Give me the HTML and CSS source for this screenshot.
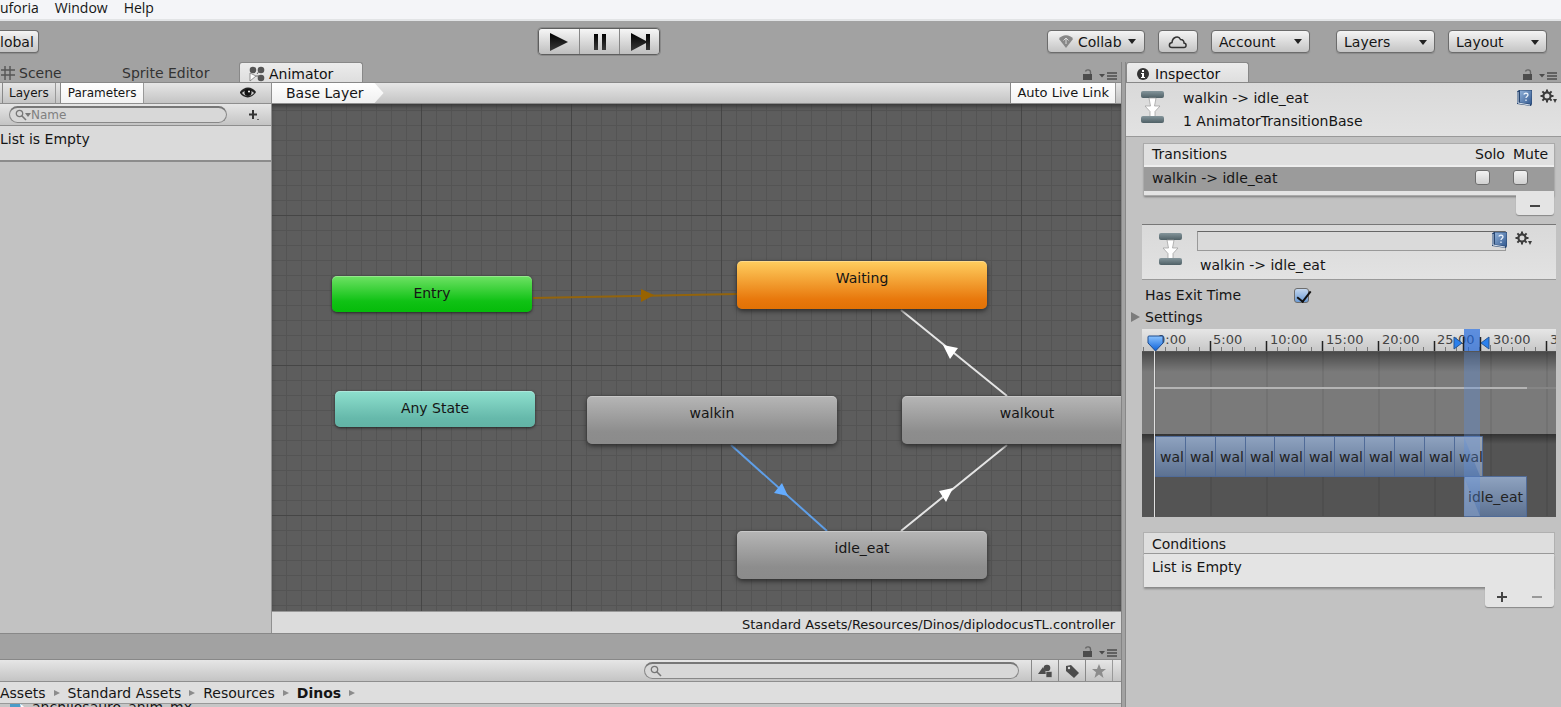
FILE: index.html
```html
<!DOCTYPE html>
<html lang="en">
<head>
<meta charset="utf-8">
<title>Animator</title>
<link rel="stylesheet" href="styles.css">
</head>
<body>
<svg class="defs" aria-hidden="true">
  <defs>
    <linearGradient id="bar" x1="0" y1="0" x2="0" y2="1"><stop offset="0" stop-color="#84959b"/><stop offset="1" stop-color="#4f6066"/></linearGradient>
    <linearGradient id="ink" x1="0" y1="0" x2="0" y2="1"><stop offset="0" stop-color="#000"/><stop offset="1" stop-color="#3a3a3a"/></linearGradient>
    <linearGradient id="book" x1="0" y1="0" x2="1" y2="1"><stop offset="0" stop-color="#8fb0d8"/><stop offset="1" stop-color="#345a90"/></linearGradient>
    <linearGradient id="clip" x1="0" y1="0" x2="0" y2="1"><stop offset="0" stop-color="#8fa3c0"/><stop offset="1" stop-color="#5c7191"/></linearGradient>
    <linearGradient id="rule" x1="0" y1="0" x2="0" y2="1"><stop offset="0" stop-color="#e6e6e6"/><stop offset="1" stop-color="#c6c6c6"/></linearGradient>
    <linearGradient id="shade" x1="0" y1="0" x2="0" y2="1"><stop offset="0" stop-color="#000" stop-opacity=".4"/><stop offset="1" stop-color="#000" stop-opacity="0"/></linearGradient>
    <linearGradient id="pin" x1="0" y1="0" x2="0" y2="1"><stop offset="0" stop-color="#8cc4ff"/><stop offset="1" stop-color="#0a5fd8"/></linearGradient>
    <symbol id="i-lock" viewBox="0 0 10 12"><path d="M0 5h9v6H0z" fill="#4c4c4c"/><path d="M7.500 5V3C7.500 .3 3 .3 2.500 2.500" fill="none" stroke="#666" stroke-width="1.400"/></symbol>
    <symbol id="i-menu" viewBox="0 0 18 10"><path d="M0 3h6L3 6.500z" fill="#4c4c4c"/><path d="M8 2h10M8 5h10M8 8h10" stroke="#4c4c4c" stroke-width="1.500"/></symbol>
    <symbol id="i-transition" viewBox="0 0 24 36"><rect x="1" y="1" width="23" height="7" rx="2" fill="url(#bar)"/><path d="M9 8h7l-1.500 8H20l-5 5.500V27h-5v-5.500L5 16h5.500z" fill="#fff" stroke="#999" stroke-width=".7"/><rect x="1" y="26" width="23" height="7" rx="2" fill="url(#bar)"/></symbol>
    <symbol id="i-help" viewBox="0 0 18 18"><path d="M1 2.500 3 1h13v14l-1 2L1 15z" fill="#27456f"/><path d="M4 1.500h11.500V15L4 13.500z" fill="url(#book)"/><path d="M2 3v11l12 2" fill="none" stroke="#dce6f2"/><path d="M7.800 5.500c.5-1.700 4.200-1.700 4.200.3 0 1.700-2 1.700-2 3.200M10 10.500V12" fill="none" stroke="#e8f0fa" stroke-width="1.300"/></symbol>
    <symbol id="i-gear" viewBox="0 0 18 16"><circle cx="7" cy="7" r="3.600" fill="none" stroke="#3c3c3c" stroke-width="2.200"/><path d="M7 .5v2.500M7 11v2.500M.5 7H3M11 7h2.500M2.400 2.400l1.800 1.800M9.800 9.800l1.800 1.800M2.400 11.600l1.800-1.800M9.800 4.200l1.800-1.800" stroke="#3c3c3c" stroke-width="2"/><path d="M13 10h4l-2 4z" fill="#3c3c3c"/></symbol>
    <symbol id="i-search" viewBox="0 0 12 12"><circle cx="4.500" cy="4.500" r="3.200" fill="none" stroke="#777" stroke-width="1.300"/><path d="m7 7 4 4" stroke="#777" stroke-width="1.600"/></symbol>
  </defs>
</svg>

<nav class="menubar"><a href="#">uforia</a><a href="#">Window</a><a href="#">Help</a></nav>

<header class="toolbar">
  <div class="tool-left"><button class="btn btn-global">lobal</button></div>
  <div class="playback">
    <button aria-label="Play"><svg width="20" height="18"><path d="M1 0v18l18-9z" fill="url(#ink)"/></svg></button>
    <button aria-label="Pause"><svg width="20" height="18"><path d="M4 1h4v16H4zM12 1h4v16h-4z" fill="url(#ink)"/></svg></button>
    <button aria-label="Step"><svg width="20" height="18"><path d="M1 0v18l15-8v7h4V1h-4v7z" fill="url(#ink)"/></svg></button>
  </div>
  <div class="tool-right">
    <button class="btn btn-drop collab"><svg width="14" height="13" viewBox="0 0 14 13"><path d="M0 4C3-1 11-1 14 4L7 13z" fill="#888"/><path d="M7 3v6M4.500 5.500 7 3l2.500 2.500" fill="none" stroke="#ddd"/></svg>Collab<span class="caret"></span></button>
    <button class="btn cloud" aria-label="Cloud services"><svg width="20" height="14" viewBox="0 0 20 14"><path d="M4 12.500C.5 12.500.5 8 4 7.500 4.500 2 10.500 0 12.500 4.500c3 .2 3.500 2 3.500 3.500 3 .5 2.500 4.500 0 4.500z" fill="none" stroke="#333" stroke-width="1.500"/></svg></button>
    <button class="btn btn-drop">Account<span class="caret"></span></button>
    <label class="drop drop-layers"><select class="btn" aria-label="Layers"><option>Layers</option></select><span class="caret"></span></label>
    <label class="drop"><select class="btn" aria-label="Layout"><option>Layout</option></select><span class="caret"></span></label>
  </div>
</header>

<div class="workspace">
  <main class="docks">
    <div class="tabs">
      <button class="tab tab-scene"><svg width="14" height="14" viewBox="0 0 14 14"><path d="M4 0v14M9 0v14M0 4h14M0 9h14" stroke="#555" stroke-width="1.400"/></svg>Scene</button>
      <button class="tab tab-sprite">Sprite Editor</button>
      <button class="tab tab-active tab-animator"><svg width="16" height="16" viewBox="0 0 16 16"><g fill="#555"><circle cx="4" cy="4" r="3.300"/><circle cx="12" cy="4" r="3.300"/><circle cx="12" cy="12" r="3.300"/></g><path d="M1 7v8l6-5z" fill="#fff" stroke="#777" stroke-width=".8"/><path d="m8 8 3-4M7 10h4" stroke="#666"/></svg>Animator</button>
      <span class="tab-tools"><svg width="10" height="12"><use href="#i-lock"/></svg><svg width="18" height="10"><use href="#i-menu"/></svg></span>
    </div>

    <section class="animator">
      <aside class="params">
        <div class="strip">
          <button class="seg">Layers</button><button class="seg seg-on">Parameters</button>
          <svg class="eye" width="16" height="12" viewBox="0 0 16 12"><path d="M0 5C4-1 12-1 16 5 12 12 4 12 0 6z" fill="#222"/><path d="M2 6c2-3 10-3 12 0-3 4-9 4-12 0z" fill="#ccc"/><circle cx="8" cy="5.500" r="3.500" fill="#111"/><circle cx="9" cy="4.500" r="1" fill="#fff"/></svg>
        </div>
        <div class="strip strip-search">
          <label class="search"><svg width="12" height="12"><use href="#i-search"/></svg><span class="search-caret"></span><input type="text" placeholder="Name" aria-label="Parameter name"></label>
          <button class="add" aria-label="Add parameter"><svg width="12" height="12" viewBox="0 0 12 12"><path d="M5 1v9M1 5.500h8" stroke="#333" stroke-width="2"/><path d="M9 10h2v1H9z" fill="#666"/></svg></button>
        </div>
        <p class="param-empty">List is Empty</p>
      </aside>

      <div class="graph">
        <div class="strip graph-strip">
          <button class="crumb-layer">Base Layer</button>
          <button class="seg seg-on live">Auto Live Link</button>
        </div>
        <div class="canvas">
          <svg class="edges" aria-hidden="true">
            <g fill="none" stroke-width="2">
              <path d="M261 194 465 190" stroke="#93640c"/>
              <path d="M735 292 629 206M629 427 735 341" stroke="#e4e4e4"/>
              <path d="M459 341 555 427" stroke="#5f9fe8"/>
            </g>
            <path d="M369 185v13l13-7z" fill="#986300"/>
            <path d="m671 241 15 3-8 11zM681 384l-14 3 7 11z" fill="#fff"/>
            <path d="m516 392-14-3 8-10z" fill="#64acff"/>
          </svg>
          <div class="node entry">Entry</div>
          <div class="node any">Any State</div>
          <div class="node state waiting">Waiting</div>
          <div class="node state walkin">walkin</div>
          <div class="node state walkout">walkout</div>
          <div class="node state idle">idle_eat</div>
        </div>
        <footer class="path">Standard Assets/Resources/Dinos/diplodocusTL.controller</footer>
      </div>
    </section>

    <section class="project">
      <div class="tabs tabs-project"><span class="tab-tools"><svg width="10" height="12"><use href="#i-lock"/></svg><svg width="18" height="10"><use href="#i-menu"/></svg></span></div>
      <div class="strip project-strip">
        <label class="search project-search"><svg width="12" height="12"><use href="#i-search"/></svg><input type="text" aria-label="Search assets"></label>
        <div class="filters">
          <button aria-label="Search by type"><svg width="15" height="14" viewBox="0 0 15 14"><path d="m0 10 5-7 4 7z" fill="#4c4c4c"/><circle cx="9" cy="4" r="3.300" fill="#4c4c4c"/><path d="M8 7.500h6v6H8z" fill="#4c4c4c" stroke="#ccc" stroke-width=".7"/></svg></button>
          <button aria-label="Search by label"><svg width="15" height="14" viewBox="0 0 15 14"><path d="M1 2 6 1l8 8-5 5-8-7z" fill="#4c4c4c"/><circle cx="4" cy="4" r="1.200" fill="#ddd"/></svg></button>
          <button aria-label="Save search"><svg width="14" height="14" viewBox="0 0 14 14"><path d="m7 0 2 5h5l-4 3.300L11.500 14 7 10.500 2.500 14 4 8.300 0 5h5z" fill="#8c8c8c"/></svg></button>
        </div>
      </div>
      <nav class="breadcrumb"><a href="#">Assets</a><i></i><a href="#">Standard Assets</a><i></i><a href="#">Resources</a><i></i><a href="#" class="here">Dinos</a><i></i></nav>
      <div class="files"><div class="file"><svg width="28" height="16"><path d="M10 4h12v12H10z" fill="#4a9cc8"/><path d="m20 4 6 6v6h-4z" fill="#fff"/></svg>anchilosauro_anim_mx</div></div>
    </section>
  </main>

  <aside class="inspector">
    <div class="tabs">
      <button class="tab tab-active tab-inspector"><svg width="12" height="12" viewBox="0 0 12 12"><circle cx="6" cy="6" r="6" fill="#333"/><path d="M5 2h2v2H5zM4 5h3v4h1v1H4V9h1V6H4z" fill="#fff"/></svg>Inspector</button>
      <span class="tab-tools"><svg width="10" height="12"><use href="#i-lock"/></svg><svg width="18" height="10"><use href="#i-menu"/></svg></span>
    </div>
    <div class="inspector-body">
      <header class="object">
        <svg class="object-icon" width="24" height="36"><use href="#i-transition"/></svg>
        <div class="object-names"><span>walkin -&gt; idle_eat</span><span>1 AnimatorTransitionBase</span></div>
        <div class="object-tools"><svg width="18" height="18"><use href="#i-help"/></svg><svg width="18" height="16"><use href="#i-gear"/></svg></div>
      </header>

      <section class="list">
        <table class="transitions">
          <thead><tr><th>Transitions</th><th class="flag">Solo</th><th class="flag">Mute</th></tr></thead>
          <tbody><tr><td>walkin -&gt; idle_eat</td><td class="flag"><input type="checkbox" aria-label="Solo"></td><td class="flag"><input type="checkbox" aria-label="Mute"></td></tr></tbody>
        </table>
        <div class="list-foot list-foot-one"><button aria-label="Remove transition"><svg width="12" height="12"><path d="M1 7h10" stroke="#444" stroke-width="2"/></svg></button></div>
      </section>

      <section class="detail">
        <svg class="detail-icon" width="24" height="36"><use href="#i-transition"/></svg>
        <div class="detail-main"><input class="name-field" type="text" aria-label="Transition name"><span>walkin -&gt; idle_eat</span></div>
        <div class="object-tools detail-tools"><svg width="18" height="18"><use href="#i-help"/></svg><svg width="18" height="16"><use href="#i-gear"/></svg></div>
      </section>

      <div class="field"><label for="exit">Has Exit Time</label><input id="exit" type="checkbox" checked></div>
      <button class="foldout"><i></i>Settings</button>

      <svg class="timeline" role="img" aria-label="Transition timeline">
        <defs>
          <pattern id="beats" x="12" y="0" width="56" height="188" patternUnits="userSpaceOnUse"><path d="M1 0v188" stroke="#000" stroke-opacity=".13"/></pattern>
        </defs>
        <rect width="100%" height="23" fill="url(#rule)"/>
        <rect y="23" width="100%" height="82" fill="#7a7a7a"/>
        <rect y="23" width="100%" height="20" fill="url(#shade)"/>
        <rect y="105" width="100%" height="83" fill="#545454"/>
        <rect y="105" width="100%" height="10" fill="url(#shade)"/>
        <rect y="23" width="100%" height="165" fill="url(#beats)"/>
        <path d="M0 22.500h600M0 187.500h600" stroke="#555"/>
        <path d="M1.500 18v4m22-4v4m11-4v4m12-4v4m11-4v4m22-4v4m11-4v4m12-4v4m11-4v4m22-4v4m11-4v4m12-4v4m11-4v4m22-4v4m11-4v4m12-4v4m11-4v4m22-4v4m11-4v4m12-4v4m11-4v4m22-4v4m11-4v4m12-4v4m11-4v4m11-6v6m11-4v4m11-4v4m12-4v4m11-4v4" stroke="#777"/>
        <path d="M68.500 12v10m56-10v10m56-10v10m56-10v10m56-10v10m112-10v10" stroke="#222" stroke-width="1.500"/>
        <g class="times"><text x="15" y="15">0:00</text><text x="71" y="15">5:00</text><text x="128" y="15">10:00</text><text x="184" y="15">15:00</text><text x="240" y="15">20:00</text><text x="295" y="15">25:00</text><text x="351" y="15">30:00</text><text x="408" y="15">35:00</text></g>
        <path d="M12 59h373" stroke="#b4b4b4" stroke-width="2"/><path d="M385 59h200" stroke="#858585" stroke-width="2"/>
        <g fill="url(#clip)" stroke="#506b98">
          <path d="M13.500 107.500h30v40h-30zM43.500 107.500h30v40h-30zM73.500 107.500h30v40h-30zM103.500 107.500h29v40h-29zM132.500 107.500h30v40h-30zM162.500 107.500h30v40h-30zM192.500 107.500h30v40h-30zM222.500 107.500h30v40h-30zM252.500 107.500h30v40h-30zM282.500 107.500h30v40h-30zM312.500 107.500h28v40h-28z"/>
          <path d="M322.500 147.500h62v40h-62z"/>
        </g>
        <path d="M322 108h18v39h-2z" fill="#aaa" fill-opacity=".5"/><path d="M322 148v39h16z" fill="#aaa" fill-opacity=".5"/>
        <g class="clips"><text x="18" y="133">wal</text><text x="48" y="133">wal</text><text x="78" y="133">wal</text><text x="108" y="133">wal</text><text x="137" y="133">wal</text><text x="167" y="133">wal</text><text x="197" y="133">wal</text><text x="227" y="133">wal</text><text x="257" y="133">wal</text><text x="287" y="133">wal</text><text x="317" y="133">wal</text><text x="326" y="173">idle_eat</text></g>
        <rect x="322" y="0" width="16" height="22" fill="#1d66dc" fill-opacity=".68"/>
        <rect x="322" y="23" width="16" height="164" fill="#5b8fe0" fill-opacity=".35"/>
        <path d="M321.500 8v14M338.500 8v14" stroke="#222" stroke-width="1.500"/>
        <path d="M312 8v12l8-6zM347 8v12l-8-6z" fill="#2b80ec" stroke="#245493"/>
        <path d="M12.500 22v166" stroke="#e0e0e0"/>
        <path d="M6 8q0-1 1-1h13q1 0 1 1v6l-7.500 8L6 14z" fill="url(#pin)" stroke="#1c4a8c"/>
      </svg>

      <section class="list conditions">
        <h2>Conditions</h2>
        <p>List is Empty</p>
        <div class="list-foot"><button aria-label="Add condition"><svg width="12" height="12"><path d="M1 6h10M6 1v10" stroke="#444" stroke-width="2"/></svg></button><button aria-label="Remove condition"><svg width="12" height="12"><path d="M1 6h10" stroke="#999" stroke-width="2"/></svg></button></div>
      </section>
    </div>
  </aside>
</div>
</body>
</html>
```

FILE: styles.css
```css
* { box-sizing: border-box; }
body {
  margin: 0; height: 100vh; overflow: hidden;
  display: flex; flex-direction: column;
  background: #a2a2a2; color: #151515;
  font: 14px/18px "DejaVu Sans", Verdana, sans-serif;
}
button, input, select { font: inherit; color: inherit; margin: 0; padding: 0; border: 0; background: none; }
button { display: flex; align-items: center; }
a { color: inherit; text-decoration: none; }
p, h2 { margin: 0; font: inherit; }
svg { flex: none; display: block; }
.defs { position: absolute; width: 0; height: 0; }

.menubar {
  flex: none; height: 21px; display: flex; gap: 16px;
  background: #f4f5f8; border-bottom: 2px solid #e2e4e6;
  font-family: "Open Sans", "Noto Sans", sans-serif; line-height: 16px;
}

/* main toolbar */
.toolbar { flex: none; height: 41px; display: grid; grid-template-columns: 538px auto 1fr; align-items: center; }
.btn {
  height: 23px; border: 1px solid #6c6c6c; border-radius: 4px;
  background: linear-gradient(#f4f4f4, #c4c4c4); box-shadow: 0 1px 1px #8a8a8a;
}
.btn-global { width: 39px; border-left: 0; border-radius: 0 4px 4px 0; }
.playback { display: flex; border: 1px solid #5e5e5e; border-radius: 4px; overflow: hidden; box-shadow: 0 0 0 1px #8a8a8a; }
.playback button { width: 40px; height: 25px; justify-content: center; background: linear-gradient(#f6f6f6, #bebebe); }
.playback button + button { border-left: 1px solid #868686; }
.tool-right { display: flex; justify-content: flex-end; gap: 13px; padding-right: 14px; }
.btn-drop { width: 99px; padding: 0 7px; gap: 5px; }
.collab { width: 98px; padding: 0 8px 0 11px; }
.cloud { width: 40px; justify-content: center; }
.caret { width: 0; height: 0; border: 4px solid transparent; border-top: 5px solid #222; border-bottom: 0; margin-left: auto; }
.drop { position: relative; }
.drop select { appearance: none; width: 99px; padding: 0 7px; display: block; }
.drop .caret { position: absolute; right: 8px; top: 10px; }
.drop-layers { margin-left: 13px; }

/* docked panels */
.workspace { flex: 1; min-height: 0; display: flex; gap: 3px; }
.docks { flex: 1; min-width: 0; display: flex; flex-direction: column; border-right: 1px solid #858585; }
.tabs { flex: none; height: 20px; display: flex; }
.tab { height: 20px; padding-top: 2px; color: #333; gap: 4px; }
.tab-active { background: linear-gradient(#ececec, #dedede); border: 1px solid #888; border-bottom: 0; border-radius: 3px 3px 0 0; color: #111; }
.tab-scene { width: 122px; padding-left: 1px; }
.tab-sprite { width: 117px; }
.tab-animator { width: 124px; padding-left: 9px; }
.tab-inspector { width: 123px; padding-left: 10px; gap: 6px; }
.tab-tools { margin-left: auto; display: flex; align-items: flex-end; gap: 6px; padding: 0 4px 1px 0; }
.strip {
  flex: none; height: 22px; display: flex; align-items: stretch;
  background: linear-gradient(#e6e6e6, #c4c4c4);
  border-top: 1px solid #888; border-bottom: 1px solid #8e8e8e; font-size: 12px;
}
.animator { flex: 1; min-height: 0; display: flex; border-bottom: 1px solid #888; }
.params { flex: none; width: 272px; background: #c2c2c2; border-right: 1px solid #909090; }
.seg { padding: 0 6px; border-left: 1px solid #888; border-right: 1px solid #999; }
.seg-on { background: linear-gradient(#fff, #f2f2f2); }
.params .seg { margin-left: 2px; }
.params .seg-on { margin-left: 4px; padding: 0 7px; }
.eye { margin: 4px 15px 0 auto; }
.strip-search { border-top: 0; align-items: center; padding-left: 9px; }
.search {
  display: flex; align-items: center; width: 218px; height: 17px; padding: 0 5px;
  border: 1px solid #888; border-top: 2px solid #777; border-radius: 9px; background: #d8d8d8;
}
.search input { flex: 1; min-width: 0; height: 14px; outline: 0; }
.search input::placeholder { color: #808080; opacity: 1; }
.search-caret { border: 3px solid transparent; border-top: 4px solid #777; border-bottom: 0; margin-left: -2px; }
.add { margin-left: auto; margin-right: 11px; }
.param-empty { height: 36px; padding-top: 4px; background: #dadada; border-bottom: 2px solid #8c8c8c; }

/* state graph */
.graph { flex: 1; min-width: 0; display: flex; flex-direction: column; }
.graph-strip { font-size: 14px; justify-content: space-between; }
.crumb-layer { padding: 0 20px 0 14px; background: linear-gradient(#fff, #f0f0f0); clip-path: polygon(0 0, calc(100% - 9px) 0, 100% 50%, calc(100% - 9px) 100%, 0 100%); }
.live { font-size: 13px; margin-right: 5px; }
.canvas {
  flex: 1; position: relative; overflow: hidden; background-color: #5d5d5d;
  box-shadow: inset 0 4px 5px -2px #333;
  background-image:
    linear-gradient(90deg, #464646 1px, transparent 1px), linear-gradient(#464646 1px, transparent 1px),
    linear-gradient(90deg, #545454 1px, transparent 1px), linear-gradient(#545454 1px, transparent 1px);
  background-size: 150px 150px, 150px 150px, 15px 15px, 15px 15px;
  background-position: 149px 111px, 149px 111px, 14px 6px, 14px 6px;
}
.edges { position: absolute; left: 0; top: 0; width: 100%; height: 100%; }
.node { position: absolute; width: 200px; height: 36px; padding-top: 8px; text-align: center; border-radius: 5px; box-shadow: 0 1px 3px #222, inset 0 1px 0 #fff4; }
.state { width: 250px; height: 48px; background: linear-gradient(#b6b6b6, #8d8d8d 75%, #8b8b8b); box-shadow: 0 2px 5px #2a2a2a, inset 0 1px 0 #fff4; }
.entry { left: 60px; top: 172px; background: linear-gradient(#6fe265, #10c215 70%, #05bb0a); }
.any { left: 63px; top: 287px; background: linear-gradient(#8ee0ce, #66b9ab 75%, #62b3a5); }
.waiting { left: 465px; top: 157px; background: linear-gradient(#ffce5f, #e8780c 80%, #e27205); }
.walkin { left: 315px; top: 292px; }
.walkout { left: 630px; top: 292px; }
.idle { left: 465px; top: 427px; }
.path { flex: none; height: 22px; padding: 4px 6px 0 0; background: #dcdcdc; border-top: 1px solid #999; text-align: right; font-size: 13px; }

/* project browser */
.project { flex: none; height: 73px; display: flex; flex-direction: column; overflow: hidden; }
.tabs-project { height: 25px; }
.project-strip { height: 23px; align-items: center; justify-content: flex-end; }
.project-search { width: 375px; margin-right: 12px; }
.filters { align-self: stretch; display: flex; margin-right: 8px; border-right: 1px solid #999; }
.filters button { width: 27px; justify-content: center; border-left: 1px solid #888; }
.breadcrumb { flex: none; height: 22px; display: flex; align-items: center; gap: 8px; background: #dedede; border-bottom: 1px solid #999; }
.breadcrumb i { border: 3px solid transparent; border-left: 6px solid #8c8c8c; border-right: 0; }
.here { font-weight: bold; }
.files { flex: 1; min-height: 0; overflow: hidden; display: flex; align-items: flex-start; background: #c6c6c6; }
.file { display: flex; align-items: center; gap: 4px; margin-top: -6px; }

/* inspector */
.inspector { flex: none; width: 436px; display: flex; flex-direction: column; border-left: 1px solid #888; }
.inspector-body { flex: 1; background: #c2c2c2; border-top: 1px solid #888; }
.object { height: 54px; display: flex; padding: 6px 3px 0 14px; background: linear-gradient(#d9d9d9, #e2e2e2); border-bottom: 1px solid #999; }
.object-icon { margin-top: 1px; }
.object-names { flex: 1; display: grid; gap: 5px; align-content: start; padding-left: 19px; }
.object-tools { display: flex; align-items: flex-start; gap: 6px; }
.list { margin: 7px 7px 0 18px; }
.transitions { width: 100%; border-collapse: collapse; background: #e0e0e0; box-shadow: 0 0 0 1px #aaa, 0 2px 2px #777; border-bottom: 4px solid #e4e4e4; }
.transitions th, .transitions td { padding: 0 0 3px 8px; text-align: left; font-weight: normal; }
.transitions th { height: 22px; padding-bottom: 1px; border-bottom: 1px solid #999; }
.transitions td { height: 27px; background: #9b9b9b; border-bottom: 1px solid #888; border-top: 2px solid #eee; }
.transitions .flag { width: 38px; padding-left: 0; }
.transitions .flag:last-child { width: 41px; }
input[type="checkbox"] { appearance: none; display: block; width: 15px; height: 15px; border: 1px solid #6d6d6d; border-radius: 3px; background: linear-gradient(#f2f2f2, #d0d0d0); }
input[type="checkbox"]:checked { position: relative; background: linear-gradient(#c3d6ee, #6c9bd4); }
input[type="checkbox"]:checked::after { content: ""; position: absolute; left: 5px; top: -1px; width: 6px; height: 12px; border: solid #111; border-width: 0 2px 2px 0; transform: rotate(38deg); }
.list-foot { width: 69px; height: 20px; margin-left: auto; display: flex; background: #e4e4e4; border-radius: 0 0 3px 3px; box-shadow: 0 1px 1px #888; position: relative; }
.list-foot button { flex: 1; justify-content: center; }
.list-foot-one { width: 38px; }
.detail { display: flex; height: 56px; margin: 9px 5px 0 16px; padding: 6px 23px 0 16px; background: linear-gradient(#d9d9d9, #e2e2e2); border-top: 1px solid #777; border-bottom: 1px solid #999; }
.detail-icon { margin-top: 1px; }
.detail-main { flex: 1; display: grid; align-content: start; gap: 5px; padding-left: 15px; }
.detail-main span { padding-left: 3px; }
.name-field { width: 100%; height: 20px; background: #dadada; border: 1px solid #999; border-top-color: #666; }
.detail-tools { margin-left: -15px; }
.field { display: flex; align-items: center; margin: 6px 0 0 19px; }
.field label { width: 149px; }
.foldout { gap: 5px; margin: 4px 0 3px 5px; }
.foldout i { border: 5px solid transparent; border-left: 9px solid #7c7c7c; border-right: 0; }
.timeline { width: calc(100% - 21px); height: 188px; margin-left: 16px; overflow: hidden; }
.times { font-size: 13px; fill: #444; }
.clips { fill: #222; }
.conditions { margin-top: 16px; }
.conditions h2 { height: 21px; padding: 2px 8px; background: #dedede; border-bottom: 1px solid #999; box-shadow: 0 0 0 1px #b0b0b0; }
.conditions p { height: 33px; padding: 4px 8px; background: #e4e4e4; box-shadow: 0 2px 2px #888; }
```
